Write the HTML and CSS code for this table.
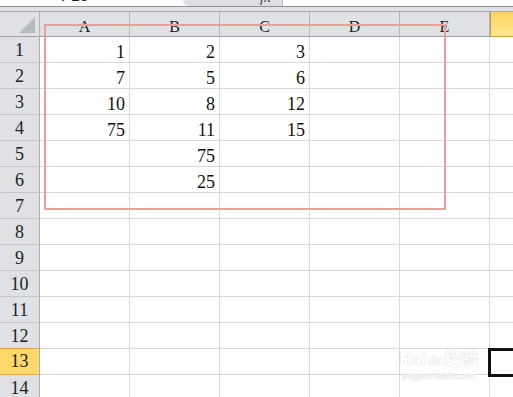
FILE: index.html
```html
<!DOCTYPE html>
<html>
<head>
<meta charset="utf-8">
<link rel="stylesheet" href="styles.css">
</head>
<body>
<div class="app">
  <div class="fbar">
    <div class="namebox"><span class="nametext">F13</span></div>
    <div class="fxbox"><span class="fx">fx</span></div>
    <div class="formula"></div>
  </div>
  <div class="gap"></div>
  <div class="sheet">
    <div class="corner"><div class="tri"></div></div>
    <div class="ch">A</div><div class="ch">B</div><div class="ch">C</div><div class="ch">D</div><div class="ch">E</div><div class="ch sel"></div>

    <div class="rh">1</div><div class="c">1</div><div class="c">2</div><div class="c">3</div><div class="c"></div><div class="c"></div><div class="c last"></div>
    <div class="rh">2</div><div class="c">7</div><div class="c">5</div><div class="c">6</div><div class="c"></div><div class="c"></div><div class="c last"></div>
    <div class="rh">3</div><div class="c">10</div><div class="c">8</div><div class="c">12</div><div class="c"></div><div class="c"></div><div class="c last"></div>
    <div class="rh">4</div><div class="c">75</div><div class="c">11</div><div class="c">15</div><div class="c"></div><div class="c"></div><div class="c last"></div>
    <div class="rh">5</div><div class="c"></div><div class="c">75</div><div class="c"></div><div class="c"></div><div class="c"></div><div class="c last"></div>
    <div class="rh">6</div><div class="c"></div><div class="c">25</div><div class="c"></div><div class="c"></div><div class="c"></div><div class="c last"></div>
    <div class="rh">7</div><div class="c"></div><div class="c"></div><div class="c"></div><div class="c"></div><div class="c"></div><div class="c last"></div>
    <div class="rh">8</div><div class="c"></div><div class="c"></div><div class="c"></div><div class="c"></div><div class="c"></div><div class="c last"></div>
    <div class="rh">9</div><div class="c"></div><div class="c"></div><div class="c"></div><div class="c"></div><div class="c"></div><div class="c last"></div>
    <div class="rh">10</div><div class="c"></div><div class="c"></div><div class="c"></div><div class="c"></div><div class="c"></div><div class="c last"></div>
    <div class="rh">11</div><div class="c"></div><div class="c"></div><div class="c"></div><div class="c"></div><div class="c"></div><div class="c last"></div>
    <div class="rh">12</div><div class="c"></div><div class="c"></div><div class="c"></div><div class="c"></div><div class="c"></div><div class="c last"></div>
    <div class="rh sel">13</div><div class="c"></div><div class="c"></div><div class="c"></div><div class="c"></div><div class="c"></div><div class="c last"></div>
    <div class="rh">14</div><div class="c"></div><div class="c"></div><div class="c"></div><div class="c"></div><div class="c"></div><div class="c last"></div>
  </div>
  <div class="redbox"></div>
  <div class="active"></div>
  <div class="watermark">
    <div class="wm-logo">Bai<span class="paw">du</span>经验</div>
    <div class="wm-url">jingyan.baidu.com</div>
  </div>
</div>
</body>
</html>
```
FILE: styles.css
```css
html, body {
  margin: 0;
  padding: 0;
  background: #ffffff;
  overflow: hidden;
}
.app {
  position: relative;
  width: 513px;
  height: 397px;
  overflow: hidden;
  font-family: "Liberation Serif", "DejaVu Serif", serif;
  color: #1a1a1a;
}
.fbar {
  display: flex;
  height: 6px;
  border-bottom: 1px solid #8e9196;
  overflow: hidden;
  background: #ffffff;
}
.namebox {
  width: 183px;
  position: relative;
}
.nametext {
  position: absolute;
  left: 61px;
  top: -13px;
  font-family: "Liberation Sans", sans-serif;
  font-size: 16px;
  color: #222;
}
.fxbox {
  width: 99px;
  background: #dcdee2;
  border-bottom-left-radius: 14px;
  border-right: 1px solid #b8bbbf;
  position: relative;
}
.fx {
  position: absolute;
  left: 77px;
  top: -11px;
  font-family: "Liberation Serif", serif;
  font-style: italic;
  font-size: 15px;
  color: #444;
}
.formula {
  flex: 1;
  background: #fff;
}
.gap {
  height: 4px;
  background: #dfe1e5;
  border-bottom: 1px solid #a7aaaf;
}
.sheet {
  display: grid;
  grid-template-columns: 40px 90px 90px 90px 90px 90px 23px;
  grid-template-rows: 25px repeat(14, 26px);
}
.corner {
  background: #dfe1e5;
  border-right: 1px solid #b3b6ba;
  border-bottom: 1px solid #9c9fa4;
  box-sizing: border-box;
  position: relative;
}
.tri {
  position: absolute;
  right: 4px;
  bottom: 3px;
  width: 0;
  height: 0;
  border-left: 16px solid transparent;
  border-bottom: 16px solid #b6b9bd;
}
.ch {
  background: #dfe1e5;
  border-right: 1px solid #b3b6ba;
  border-bottom: 1px solid #9c9fa4;
  box-sizing: border-box;
  text-align: center;
  font-size: 16px;
  line-height: 30px;
  color: #222;
}
.ch.sel {
  background: linear-gradient(#fed564, #ffe98e);
  border-left: 1px solid #c99a3c;
  border-bottom: 1px solid #c99a3c;
  border-right: none;
}
.rh {
  background: #dfe1e5;
  border-right: 1px solid #a9acb1;
  border-bottom: 1px solid #c3c6ca;
  box-sizing: border-box;
  text-align: center;
  font-size: 18px;
  line-height: 27px;
  color: #222;
}
.rh.sel {
  background: #ffd86a;
  border-top: 1px solid #e3a84a;
  border-bottom: 1px solid #e3a84a;
  line-height: 25px;
  margin-top: -1px;
}
.c {
  border-right: 1px solid #d9d9d9;
  border-bottom: 1px solid #d9d9d9;
  box-sizing: border-box;
  text-align: right;
  padding-right: 4px;
  font-size: 18px;
  line-height: 30px;
  color: #111;
}
.c.last {
  border-right: none;
}
.redbox {
  position: absolute;
  left: 44px;
  top: 24px;
  width: 398px;
  height: 182px;
  border: 2px solid #f39a9a;
}
.active {
  position: absolute;
  left: 488px;
  top: 348px;
  width: 40px;
  height: 23px;
  border: 3px solid #111;
}
.watermark {
  position: absolute;
  left: 393px;
  top: 350px;
  width: 92px;
  text-align: center;
  white-space: nowrap;
  color: #ffffff;
  font-family: "Liberation Sans", "Noto Sans CJK SC", sans-serif;
  text-shadow: 0 0 1px #d0d0d0, 0 0 1px #d0d0d0;
}
.wm-logo {
  font-size: 17px;
  font-weight: bold;
  line-height: 20px;
}
.paw {
  font-size: 12px;
  margin: 0 2px;
}
.wm-url {
  font-size: 9px;
  line-height: 11px;
}
```
